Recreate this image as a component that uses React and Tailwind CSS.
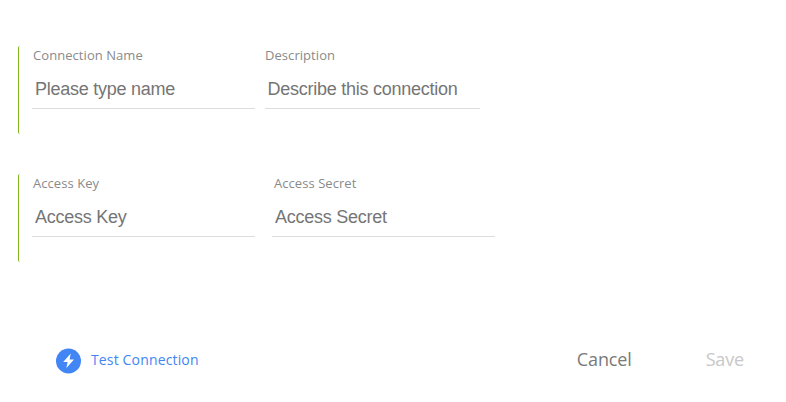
import { useState } from 'react';

const rows = [
  {
    className: 'flex h-22 rounded-l-[2px] border-l border-[#7fb51a] pl-[13px]',
    fields: [
      { name: 'name', label: 'Connection Name', placeholder: 'Please type name', width: 'w-[223px]', labelPad: 'pl-px', inputPad: 'pl-[3px]' },
      { name: 'description', label: 'Description', placeholder: 'Describe this connection', width: 'ml-[10px] w-[215px]', labelPad: '', inputPad: 'pl-[2.5px]' },
    ],
  },
  {
    className: 'mt-10 flex h-22 rounded-l-[2px] border-l border-[#7fb51a] pl-[13px]',
    fields: [
      { name: 'accessKey', label: 'Access Key', placeholder: 'Access Key', width: 'w-[223px]', labelPad: 'pl-px', inputPad: 'pl-[3px]' },
      { name: 'accessSecret', label: 'Access Secret', placeholder: 'Access Secret', width: 'ml-[17px] w-[223px]', labelPad: 'pl-[2px]', inputPad: 'pl-[3px]' },
    ],
  },
];

function Field({ field, value, onChange }) {
  return (
    <label className={`block ${field.width}`}>
      <span className={`block h-[18px] text-[13px] leading-[18px] tracking-[0.06px] text-[#8a8a8a] ${field.labelPad}`}>{field.label}</span>
      <input
        type="text"
        name={field.name}
        value={value}
        placeholder={field.placeholder}
        onChange={(e) => onChange(field.name, e.target.value)}
        className={`block h-[45px] w-full border-b border-[#dcdcdc] pt-[8px] pb-[2px] font-['Liberation_Sans',sans-serif] text-[18px] tracking-[-0.25px] text-[#444] placeholder:text-[#757575] focus:outline-none ${field.inputPad}`}
      />
    </label>
  );
}

export default function App() {
  const [form, setForm] = useState({ name: '', description: '', accessKey: '', accessSecret: '' });

  const handleChange = (name, value) => setForm((prev) => ({ ...prev, [name]: value }));

  const canSave = Boolean(form.name && form.accessKey && form.accessSecret);

  return (
    <form
      onSubmit={(e) => e.preventDefault()}
      className="flex h-[402px] w-[786px] flex-col bg-white pt-[46px] pl-[18px] font-['Open_Sans','Noto_Sans',sans-serif]"
    >
      {rows.map((row) => (
        <div key={row.fields[0].name} className={row.className}>
          {row.fields.map((field) => (
            <Field key={field.name} field={field} value={form[field.name]} onChange={handleChange} />
          ))}
        </div>
      ))}

      {/* Actions */}
      <div className="mt-[86px] flex h-[25px] items-start pr-[42px] pl-[38px]">
        <button type="button" className="flex items-start gap-[10px] text-[14px] leading-5 tracking-[0.15px] text-[#4285f4]">
          <svg viewBox="0 0 25 26" className="h-[26px] w-[25px]" aria-hidden="true">
            <circle cx="12.5" cy="13" r="12.5" fill="#4285f4" />
            <path d="M14.7 5.6 7.2 14h4.4l-1.2 6 7.6-8.4h-4.4z" fill="#fff" />
          </svg>
          <span className="mt-[2px]">Test Connection</span>
        </button>
        <button type="button" className="-mt-px ml-auto text-[18px] leading-6 tracking-[-0.15px] text-[#7a7a7a]">Cancel</button>
        <button type="submit" disabled={!canSave} className="-mt-px ml-[74px] text-[18px] leading-6 tracking-[-0.15px] text-[#7a7a7a] disabled:text-[#c8c8c8]">
          Save
        </button>
      </div>
    </form>
  );
}
